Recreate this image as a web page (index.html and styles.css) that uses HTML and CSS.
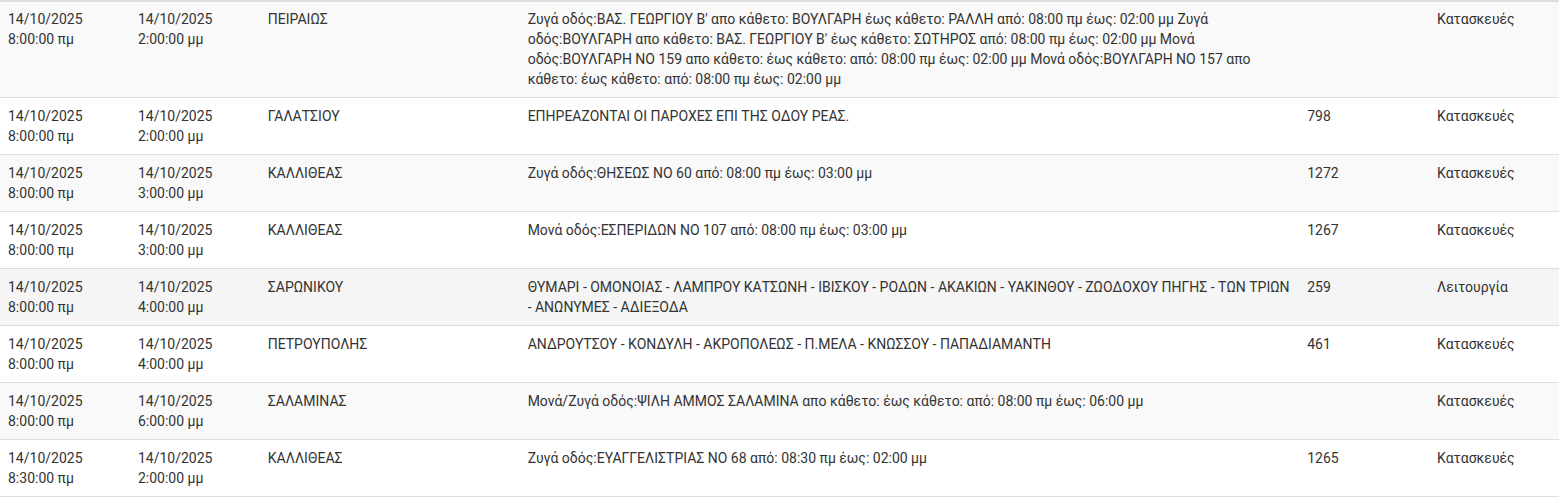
FILE: index.html
```html
<!DOCTYPE html>
<html lang="el">
<head>
<meta charset="utf-8">
<title>Διακοπές</title>
<link rel="stylesheet" href="styles.css">
</head>
<body>
<table class="outages">
  <colgroup>
    <col class="c-narrow"><col class="c-narrow"><col class="c-area"><col class="c-desc"><col class="c-narrow"><col class="c-narrow">
  </colgroup>
  <tbody>
    <tr>
      <td>14/10/2025<br>8:00:00 πμ</td>
      <td>14/10/2025<br>2:00:00 μμ</td>
      <td>ΠΕΙΡΑΙΩΣ</td>
      <td>Ζυγά οδός:ΒΑΣ. ΓΕΩΡΓΙΟΥ Β' απο κάθετο: ΒΟΥΛΓΑΡΗ έως κάθετο: ΡΑΛΛΗ από: 08:00 πμ έως: 02:00 μμ Ζυγά οδός:ΒΟΥΛΓΑΡΗ απο κάθετο: ΒΑΣ. ΓΕΩΡΓΙΟΥ Β' έως κάθετο: ΣΩΤΗΡΟΣ από: 08:00 πμ έως: 02:00 μμ Μονά οδός:ΒΟΥΛΓΑΡΗ ΝΟ 159 απο κάθετο: έως κάθετο: από: 08:00 πμ έως: 02:00 μμ Μονά οδός:ΒΟΥΛΓΑΡΗ ΝΟ 157 απο κάθετο: έως κάθετο: από: 08:00 πμ έως: 02:00 μμ</td>
      <td></td>
      <td>Κατασκευές</td>
    </tr>
    <tr>
      <td>14/10/2025<br>8:00:00 πμ</td>
      <td>14/10/2025<br>2:00:00 μμ</td>
      <td>ΓΑΛΑΤΣΙΟΥ</td>
      <td>ΕΠΗΡΕΑΖΟΝΤΑΙ ΟΙ ΠΑΡΟΧΕΣ ΕΠΙ ΤΗΣ ΟΔΟΥ ΡΕΑΣ.</td>
      <td>798</td>
      <td>Κατασκευές</td>
    </tr>
    <tr>
      <td>14/10/2025<br>8:00:00 πμ</td>
      <td>14/10/2025<br>3:00:00 μμ</td>
      <td>ΚΑΛΛΙΘΕΑΣ</td>
      <td>Ζυγά οδός:ΘΗΣΕΩΣ ΝΟ 60 από: 08:00 πμ έως: 03:00 μμ</td>
      <td>1272</td>
      <td>Κατασκευές</td>
    </tr>
    <tr>
      <td>14/10/2025<br>8:00:00 πμ</td>
      <td>14/10/2025<br>3:00:00 μμ</td>
      <td>ΚΑΛΛΙΘΕΑΣ</td>
      <td>Μονά οδός:ΕΣΠΕΡΙΔΩΝ ΝΟ 107 από: 08:00 πμ έως: 03:00 μμ</td>
      <td>1267</td>
      <td>Κατασκευές</td>
    </tr>
    <tr class="is-hover">
      <td>14/10/2025<br>8:00:00 πμ</td>
      <td>14/10/2025<br>4:00:00 μμ</td>
      <td>ΣΑΡΩΝΙΚΟΥ</td>
      <td>ΘΥΜΑΡΙ - ΟΜΟΝΟΙΑΣ - ΛΑΜΠΡΟΥ ΚΑΤΣΩΝΗ - ΙΒΙΣΚΟΥ - ΡΟΔΩΝ - ΑΚΑΚΙΩΝ - ΥΑΚΙΝΘΟΥ - ΖΩΟΔΟΧΟΥ ΠΗΓΗΣ - ΤΩΝ ΤΡΙΩΝ - ΑΝΩΝΥΜΕΣ - ΑΔΙΕΞΟΔΑ</td>
      <td>259</td>
      <td>Λειτουργία</td>
    </tr>
    <tr>
      <td>14/10/2025<br>8:00:00 πμ</td>
      <td>14/10/2025<br>4:00:00 μμ</td>
      <td>ΠΕΤΡΟΥΠΟΛΗΣ</td>
      <td>ΑΝΔΡΟΥΤΣΟΥ - ΚΟΝΔΥΛΗ - ΑΚΡΟΠΟΛΕΩΣ - Π.ΜΕΛΑ - ΚΝΩΣΣΟΥ - ΠΑΠΑΔΙΑΜΑΝΤΗ</td>
      <td>461</td>
      <td>Κατασκευές</td>
    </tr>
    <tr>
      <td>14/10/2025<br>8:00:00 πμ</td>
      <td>14/10/2025<br>6:00:00 μμ</td>
      <td>ΣΑΛΑΜΙΝΑΣ</td>
      <td>Μονά/Ζυγά οδός:ΨΙΛΗ ΑΜΜΟΣ ΣΑΛΑΜΙΝΑ απο κάθετο: έως κάθετο: από: 08:00 πμ έως: 06:00 μμ</td>
      <td></td>
      <td>Κατασκευές</td>
    </tr>
    <tr>
      <td>14/10/2025<br>8:30:00 πμ</td>
      <td>14/10/2025<br>2:00:00 μμ</td>
      <td>ΚΑΛΛΙΘΕΑΣ</td>
      <td>Ζυγά οδός:ΕΥΑΓΓΕΛΙΣΤΡΙΑΣ ΝΟ 68 από: 08:30 πμ έως: 02:00 μμ</td>
      <td>1265</td>
      <td>Κατασκευές</td>
    </tr>
  </tbody>
</table>
</body>
</html>
```

FILE: styles.css
```css
html, body {
  margin: 0;
  padding: 0;
  background: #fff;
}

body {
  font-family: Roboto, "Noto Sans", sans-serif;
  font-size: 14px;
  line-height: 20px;
  color: #333;
}

.outages {
  width: 100%;
  border-collapse: collapse;
  border-spacing: 0;
  table-layout: fixed;
  border-bottom: 1px solid #ddd;
}

.c-narrow { width: 8.3333%; }
.c-area { width: 16.6667%; }
.c-desc { width: 50%; }

.outages td {
  padding: 8px;
  vertical-align: top;
  border-top: 1px solid #ddd;
  text-align: left;
}

.outages tr:first-child td {
  border-top: 2px solid #ddd;
  padding-top: 7px;
}

.outages tr:nth-child(odd) {
  background: #f9f9f9;
}

.outages tr.is-hover {
  background: #f5f5f5;
}
```
